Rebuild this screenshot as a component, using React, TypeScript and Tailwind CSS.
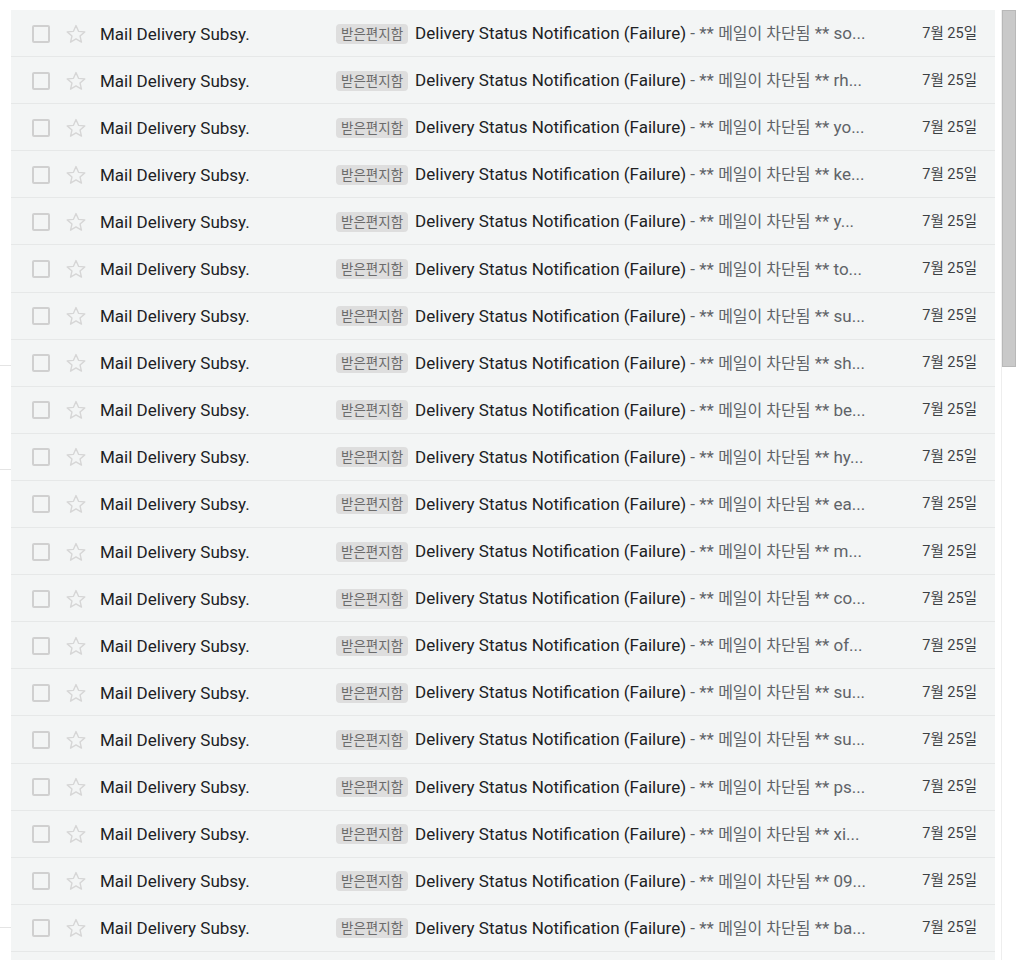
import React from "react";

const prefixes = [
  "so", "rh", "yo", "ke", "y", "to", "su", "sh", "be", "hy",
  "ea", "m", "co", "of", "su", "su", "ps", "xi", "09", "ba",
];

function Star() {
  return (
    <svg width="22" height="22" viewBox="0 0 24 24" fill="none">
      <path
        d="M12 2.8l2.75 6.3 6.85.6-5.2 4.5 1.56 6.7L12 17.35 6.04 20.9l1.56-6.7-5.2-4.5 6.85-.6z"
        stroke="#d6d6d6"
        strokeWidth="1.5"
        strokeLinejoin="round"
      />
    </svg>
  );
}

function Row({ p }: { p: string }) {
  return (
    <div className="flex h-[47.1px] shrink-0 items-center border-b border-[#e6e8e8] bg-[#f3f5f5] pl-[21px] pr-[18px] pt-[1px]">
      <div className="h-[18px] w-[18px] shrink-0 rounded-[2px] border-2 border-[#d0d0d0]" />
      <div className="ml-[15px] flex h-[22px] w-[22px] shrink-0 items-center justify-center">
        <Star />
      </div>
      <div className="ml-[13px] w-[236px] shrink-0 truncate text-[17px] leading-[22px] text-[#202124]">
        Mail Delivery Subsy.
      </div>
      <div className="flex min-w-0 flex-1 items-center">
        <span className="shrink-0 rounded-[4px] bg-[#dedede] px-[5px] py-[1px] text-[13.5px] leading-[18px] text-[#6b6b6b]">
          받은편지함
        </span>
        <span className="ml-[7px] truncate text-[17px] leading-[22px] text-[#202124]">
          Delivery Status Notification (Failure)
          <span className="text-[#5f6368]">
            {" "}- ** <span className="text-[16px]">메일이 차단됨</span> ** {p}...
          </span>
        </span>
      </div>
      <div className="w-[90px] shrink-0 text-right text-[14.5px] leading-[22px] text-[#3c4043]">7월 25일</div>
    </div>
  );
}

export default function App() {
  return (
    <div
      className="relative flex h-[960px] w-[1024px] overflow-hidden bg-white"
      style={{ fontFamily: "Roboto, 'Noto Sans CJK KR', sans-serif" }}
    >
      <div className="flex w-[11px] shrink-0 flex-col">
        <div className="h-[365px] shrink-0" />
        <div className="h-px shrink-0 bg-[#e4e4e4]" />
        <div className="h-[103px] shrink-0" />
        <div className="h-px shrink-0 bg-[#e4e4e4]" />
        <div className="h-[457px] shrink-0" />
        <div className="h-px shrink-0 bg-[#e4e4e4]" />
      </div>
      <div className="mt-[10px] flex w-[984px] shrink-0 flex-col">
        {prefixes.map((p, i) => (
          <Row key={i} p={p} />
        ))}
        <div className="h-[47px] shrink-0 bg-[#f3f5f5]" />
      </div>
      <div className="ml-[6px] mt-[10px] flex w-[16px] shrink-0 flex-col border-l border-[#eeeeee]">
        <div className="h-[357px] w-[14px] border border-[#b8b8b8] bg-[#c9c9c9]" />
      </div>
    </div>
  );
}
